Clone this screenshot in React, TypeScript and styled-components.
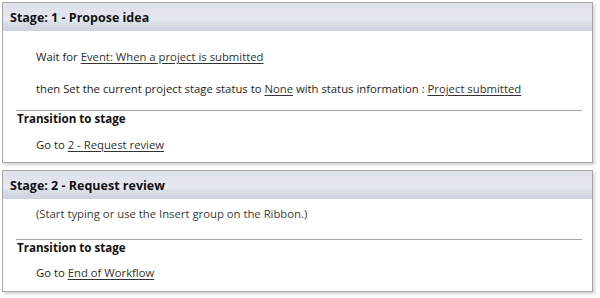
import React from "react";
import styled, { createGlobalStyle } from "styled-components";

const Global = createGlobalStyle`
  html, body { margin: 0; padding: 0; background: #ffffff; }
  body { font-family: "Open Sans", "Noto Sans", sans-serif; font-size: 11.3px; color: #1e1e1e; }
`;

const Page = styled.div`
  width: 600px;
  height: 298px;
  padding: 2px 0 0 2px;
  box-sizing: border-box;
  display: flex;
  flex-direction: column;
  gap: 7px;
`;

const Card = styled.div`
  width: 591px;
  box-sizing: border-box;
  border: 1px solid #a7a7a7;
  background: #ffffff;
  box-shadow: 2px 2px 3px rgba(0, 0, 0, 0.18);
`;

const Header = styled.div`
  height: 28px;
  display: flex;
  align-items: center;
  padding-left: 7px;
  font-weight: 700;
  font-size: 12.5px;
  color: #111;
  background: linear-gradient(
    to bottom,
    #dfe2ea 0%,
    #e2e5ed 45%,
    #e8ebf2 55%,
    #d6dbe4 75%,
    #cdd3de 100%
  );
`;

const Body = styled.div<{ $top: number; $bottom: number }>`
  padding: ${(p) => p.$top}px 10px ${(p) => p.$bottom}px 13px;
  display: flex;
  flex-direction: column;
`;

const Line = styled.div<{ $gap?: number }>`
  line-height: 16px;
  padding-left: 20px;
  margin-top: ${(p) => p.$gap ?? 0}px;
  white-space: nowrap;
`;

const Placeholder = styled(Line)`
  color: #3a3a3a;
`;

const Separator = styled.div<{ $gap: number }>`
  height: 1px;
  background: #a7a7a7;
  margin-top: ${(p) => p.$gap}px;
`;

const Section = styled.div`
  font-weight: 700;
  font-size: 11.6px;
  line-height: 16px;
  padding-left: 1px;
  color: #111;
`;

const Link = styled.a`
  color: #333;
  text-decoration: underline;
  text-underline-offset: 2px;
  cursor: pointer;
`;

export default function App() {
  return (
    <>
      <Global />
      <Page>
        <Card>
          <Header>Stage: 1 - Propose idea</Header>
          <Body $top={18} $bottom={9}>
            <Line>
              Wait for <Link>Event: When a project is submitted</Link>
            </Line>
            <Line $gap={16}>
              then Set the current project stage status to <Link>None</Link> with status
              information : <Link>Project submitted</Link>
            </Line>
            <Separator $gap={13} />
            <Section>Transition to stage</Section>
            <Line $gap={10}>
              Go to <Link>2 - Request review</Link>
            </Line>
          </Body>
        </Card>
        <Card>
          <Header>Stage: 2 - Request review</Header>
          <Body $top={7} $bottom={10}>
            <Placeholder>(Start typing or use the Insert group on the Ribbon.)</Placeholder>
            <Separator $gap={17} />
            <Section>Transition to stage</Section>
            <Line $gap={9}>
              Go to <Link>End of Workflow</Link>
            </Line>
          </Body>
        </Card>
      </Page>
    </>
  );
}
